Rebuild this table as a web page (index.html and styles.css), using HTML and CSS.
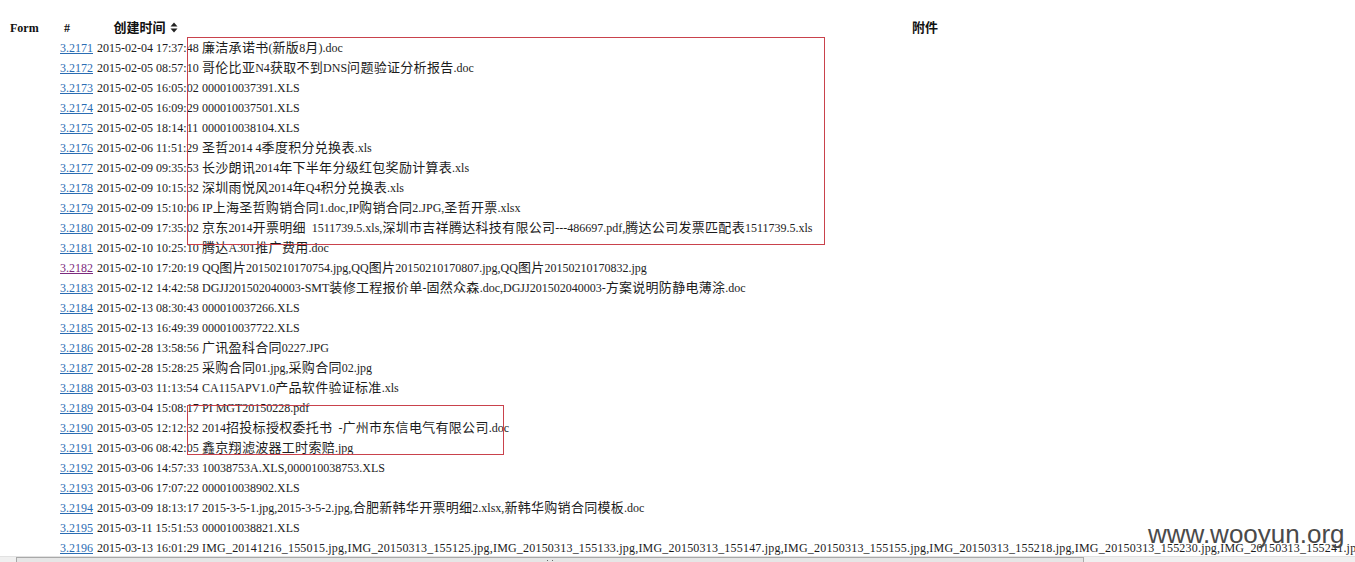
FILE: index.html
```html
<!DOCTYPE html>
<html>
<head>
<meta charset="utf-8">
<title>附件</title>
<link rel="stylesheet" href="styles.css">
</head>
<body>
<div class="viewport">
  <div class="page">
    <table class="grid">
      <colgroup>
        <col class="c-form"><col class="c-num"><col class="c-date"><col class="c-att">
      </colgroup>
      <thead>
        <tr>
          <th class="h-form">Form</th>
          <th class="h-num">#</th>
          <th class="h-date"><span class="cnb">创建时间</span><svg class="sort" width="8" height="11" viewBox="0 0 8 11"><path d="M4 0.5 L7.5 4.5 L0.5 4.5 Z M0.5 6.5 L7.5 6.5 L4 10.5 Z" fill="#222"/></svg></th>
          <th class="h-att"><span class="cnb">附件</span></th>
        </tr>
      </thead>
      <tbody>
        <tr><td></td><td><a href="#">3.2171</a></td><td>2015-02-04 17:37:48</td><td><span class="cn">廉洁承诺书</span>(<span class="cn">新版</span>8<span class="cn">月</span>).doc</td></tr>
        <tr><td></td><td><a href="#">3.2172</a></td><td>2015-02-05 08:57:10</td><td><span class="cn">哥伦比亚</span>N4<span class="cn">获取不到</span>DNS<span class="cn">问题验证分析报告</span>.doc</td></tr>
        <tr><td></td><td><a href="#">3.2173</a></td><td>2015-02-05 16:05:02</td><td>000010037391.XLS</td></tr>
        <tr><td></td><td><a href="#">3.2174</a></td><td>2015-02-05 16:09:29</td><td>000010037501.XLS</td></tr>
        <tr><td></td><td><a href="#">3.2175</a></td><td>2015-02-05 18:14:11</td><td>000010038104.XLS</td></tr>
        <tr><td></td><td><a href="#">3.2176</a></td><td>2015-02-06 11:51:29</td><td><span class="cn">圣哲</span>2014 4<span class="cn">季度积分兑换表</span>.xls</td></tr>
        <tr><td></td><td><a href="#">3.2177</a></td><td>2015-02-09 09:35:53</td><td><span class="cn">长沙朗讯</span>2014<span class="cn">年下半年分级红包奖励计算表</span>.xls</td></tr>
        <tr><td></td><td><a href="#">3.2178</a></td><td>2015-02-09 10:15:32</td><td><span class="cn">深圳雨悦风</span>2014<span class="cn">年</span>Q4<span class="cn">积分兑换表</span>.xls</td></tr>
        <tr><td></td><td><a href="#">3.2179</a></td><td>2015-02-09 15:10:06</td><td>IP<span class="cn">上海圣哲购销合同</span>1.doc,IP<span class="cn">购销合同</span>2.JPG,<span class="cn">圣哲开票</span>.xlsx</td></tr>
        <tr><td></td><td><a href="#">3.2180</a></td><td>2015-02-09 17:35:02</td><td><span class="cn">京东</span>2014<span class="cn">开票明细</span>&nbsp; 1511739.5.xls,<span class="cn">深圳市吉祥腾达科技有限公司</span>---486697.pdf,<span class="cn">腾达公司发票匹配表</span>1511739.5.xls</td></tr>
        <tr><td></td><td><a href="#">3.2181</a></td><td>2015-02-10 10:25:10</td><td><span class="cn">腾达</span>A301<span class="cn">推广费用</span>.doc</td></tr>
        <tr><td></td><td><a href="#" class="visited">3.2182</a></td><td>2015-02-10 17:20:19</td><td>QQ<span class="cn">图片</span>20150210170754.jpg,QQ<span class="cn">图片</span>20150210170807.jpg,QQ<span class="cn">图片</span>20150210170832.jpg</td></tr>
        <tr><td></td><td><a href="#">3.2183</a></td><td>2015-02-12 14:42:58</td><td>DGJJ201502040003-SMT<span class="cn">装修工程报价单</span>-<span class="cn">固然众森</span>.doc,DGJJ201502040003-<span class="cn">方案说明防静电薄涂</span>.doc</td></tr>
        <tr><td></td><td><a href="#">3.2184</a></td><td>2015-02-13 08:30:43</td><td>000010037266.XLS</td></tr>
        <tr><td></td><td><a href="#">3.2185</a></td><td>2015-02-13 16:49:39</td><td>000010037722.XLS</td></tr>
        <tr><td></td><td><a href="#">3.2186</a></td><td>2015-02-28 13:58:56</td><td><span class="cn">广讯盈科合同</span>0227.JPG</td></tr>
        <tr><td></td><td><a href="#">3.2187</a></td><td>2015-02-28 15:28:25</td><td><span class="cn">采购合同</span>01.jpg,<span class="cn">采购合同</span>02.jpg</td></tr>
        <tr><td></td><td><a href="#">3.2188</a></td><td>2015-03-03 11:13:54</td><td>CA115APV1.0<span class="cn">产品软件验证标准</span>.xls</td></tr>
        <tr><td></td><td><a href="#">3.2189</a></td><td>2015-03-04 15:08:17</td><td>PI MGT20150228.pdf</td></tr>
        <tr><td></td><td><a href="#">3.2190</a></td><td>2015-03-05 12:12:32</td><td>2014<span class="cn">招投标授权委托书</span>&nbsp; -<span class="cn">广州市东信电气有限公司</span>.doc</td></tr>
        <tr><td></td><td><a href="#">3.2191</a></td><td>2015-03-06 08:42:05</td><td><span class="cn">鑫京翔滤波器工时索赔</span>.jpg</td></tr>
        <tr><td></td><td><a href="#">3.2192</a></td><td>2015-03-06 14:57:33</td><td>10038753A.XLS,000010038753.XLS</td></tr>
        <tr><td></td><td><a href="#">3.2193</a></td><td>2015-03-06 17:07:22</td><td>000010038902.XLS</td></tr>
        <tr><td></td><td><a href="#">3.2194</a></td><td>2015-03-09 18:13:17</td><td>2015-3-5-1.jpg,2015-3-5-2.jpg,<span class="cn">合肥新韩华开票明细</span>2.xlsx,<span class="cn">新韩华购销合同模板</span>.doc</td></tr>
        <tr><td></td><td><a href="#">3.2195</a></td><td>2015-03-11 15:51:53</td><td>000010038821.XLS</td></tr>
        <tr><td></td><td><a href="#">3.2196</a></td><td>2015-03-13 16:01:29</td><td class="long">IMG_20141216_155015.jpg,IMG_20150313_155125.jpg,IMG_20150313_155133.jpg,IMG_20150313_155147.jpg,IMG_20150313_155155.jpg,IMG_20150313_155218.jpg,IMG_20150313_155230.jpg,IMG_20150313_155241.jpg,IMG_20150313_155252.jpg</td></tr>
      </tbody>
    </table>
    <div class="mark mark-1"></div>
    <div class="mark mark-2"></div>
    <div class="watermark">www.wooyun.org</div>
  </div>
  <div class="hscroll">
    <div class="hs-arrow"></div>
    <div class="hs-thumb"><span class="hs-grip"></span></div>
  </div>
</div>
</body>
</html>
```

FILE: styles.css
```css
html, body {
  margin: 0;
  padding: 0;
  background: #fff;
  overflow: hidden;
}
.viewport {
  width: 1355px;
  height: 562px;
  display: flex;
  flex-direction: column;
  overflow: hidden;
}
.page {
  position: relative;
  flex: 0 0 556px;
  overflow: hidden;
  padding: 17px 0 0 8px;
  box-sizing: border-box;
}
.grid {
  border-collapse: collapse;
  table-layout: fixed;
  width: 1642px;
  font-family: "Liberation Serif", "Times New Roman", "Noto Sans CJK SC", serif;
  font-size: 12px;
  color: #1c1c1c;
}
.c-form { width: 50px; }
.c-num { width: 37px; }
.c-date { width: 105px; }
.grid th, .grid td {
  padding: 0 2px;
  height: 20px;
  line-height: 20px;
  white-space: nowrap;
  vertical-align: middle;
}
.grid th {
  font-weight: bold;
  color: #111;
}
.grid .h-form { text-align: left; }
.grid .h-num { text-align: left; padding-left: 6px; }
.grid .h-date, .grid .h-att { text-align: center; }
.grid .h-date { padding-right: 6px; }
.cnb {
  font-family: "Noto Sans CJK SC", sans-serif;
  font-size: 13px;
  font-weight: bold;
}
.sort {
  vertical-align: -1px;
  margin-left: 4px;
}
.cn {
  font-family: "Noto Sans CJK SC", sans-serif;
  font-size: 13px;
  letter-spacing: 0.3px;
  line-height: 1;
}
.grid .long {
  letter-spacing: 0.2px;
}
.grid a {
  color: #2b6db3;
  text-decoration: underline;
}
.grid a.visited {
  color: #7d2a7d;
}
.mark {
  position: absolute;
  border: 1px solid #c9424c;
  box-sizing: border-box;
  pointer-events: none;
}
.mark-1 { left: 187px; top: 37px; width: 638px; height: 208px; }
.mark-2 { left: 187px; top: 405px; width: 317px; height: 50px; }
.watermark {
  position: absolute;
  left: 1148px;
  top: 521px;
  font-family: "Liberation Sans", Arial, sans-serif;
  font-size: 26px;
  line-height: 26px;
  color: #4a4a4a;
  white-space: nowrap;
}
.hscroll {
  flex: 0 0 6px;
  display: flex;
  background: #f0f0f0;
  border-top: 1px solid #e2e2e2;
}
.hs-arrow {
  width: 16px;
  flex: 0 0 16px;
}
.hs-thumb {
  flex: 0 0 1066px;
  border: 1px solid #a9a9a9;
  border-bottom: none;
  background: #e6e6e6;
  display: flex;
  justify-content: center;
}
.hs-grip {
  width: 4px;
  margin-top: 2px;
  height: 3px;
  border-left: 1px dotted #666;
  border-right: 1px dotted #666;
}
```
